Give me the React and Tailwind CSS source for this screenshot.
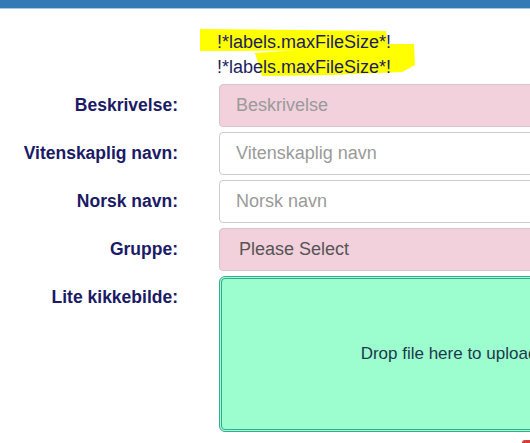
import React from 'react';

const labelCls =
  'h-[43px] flex items-center justify-end text-[17.5px] font-bold text-[#1b1a66] whitespace-nowrap';
const inputCls =
  'h-[43px] w-full rounded-[4px] border px-[16px] text-[18px] outline-none placeholder:text-[#9a9a9a]';

const App = () => {
  return (
    <div className="relative w-[530px] h-[443px] overflow-hidden bg-white font-['Liberation_Sans',Arial,sans-serif]">
      {/* Top navbar strip */}
      <div className="h-[9px] bg-[#337ab7] border-b border-[#a9c7e3]" />

      {/* Highlighter marks over the debug labels */}
      <svg className="absolute left-0 top-0 pointer-events-none" width="530" height="90">
        <path d="M200 29 L386 31 L388 50 L200 51 Z" fill="#ffff00" />
        <path d="M255 53 L330 48 L392 44 L414 44 L415 65 L402 72 L330 75 L262 76 Z" fill="#ffff00" />
      </svg>

      <div className="relative pt-[21px] pl-[217px] text-[18px] leading-[25px] text-[#1c1c5e]">
        <div>!*labels.maxFileSize*!</div>
        <div>!*labels.maxFileSize*!</div>
      </div>

      {/* Form rows */}
      <div className="mt-[4px] grid grid-cols-[178px_460px] gap-x-[41px] gap-y-[5px]">
        <div className={labelCls}>Beskrivelse:</div>
        <input className={`${inputCls} bg-[#f2d0dc] border-[#d8c4cb]`} placeholder="Beskrivelse" />

        <div className={labelCls}>Vitenskaplig navn:</div>
        <input className={`${inputCls} bg-white border-[#cccccc]`} placeholder="Vitenskaplig navn" />

        <div className={labelCls}>Norsk navn:</div>
        <input className={`${inputCls} bg-white border-[#cccccc]`} placeholder="Norsk navn" />

        <div className={labelCls}>Gruppe:</div>
        <div className="h-[43px] flex items-center rounded-[4px] border border-[#d8c4cb] bg-[#f2d0dc] pl-[19px] text-[18px] text-[#555555]">
          Please Select
        </div>

        <div className={labelCls}>Lite kikkebilde:</div>
        <div className="h-[156px] flex items-center justify-center rounded-[6px] border-[3px] border-double border-[#37ab92] bg-[#9cfdcf] text-[17px] text-[#1d3a4c]">
          Drop file here to upload
        </div>

        <div />
        <div className="mt-[3px] pl-[303px]">
          <span className="block w-[14px] h-[10px] rounded-[3px] bg-[#d43f3a]" />
        </div>
      </div>
    </div>
  );
};

export default App;
